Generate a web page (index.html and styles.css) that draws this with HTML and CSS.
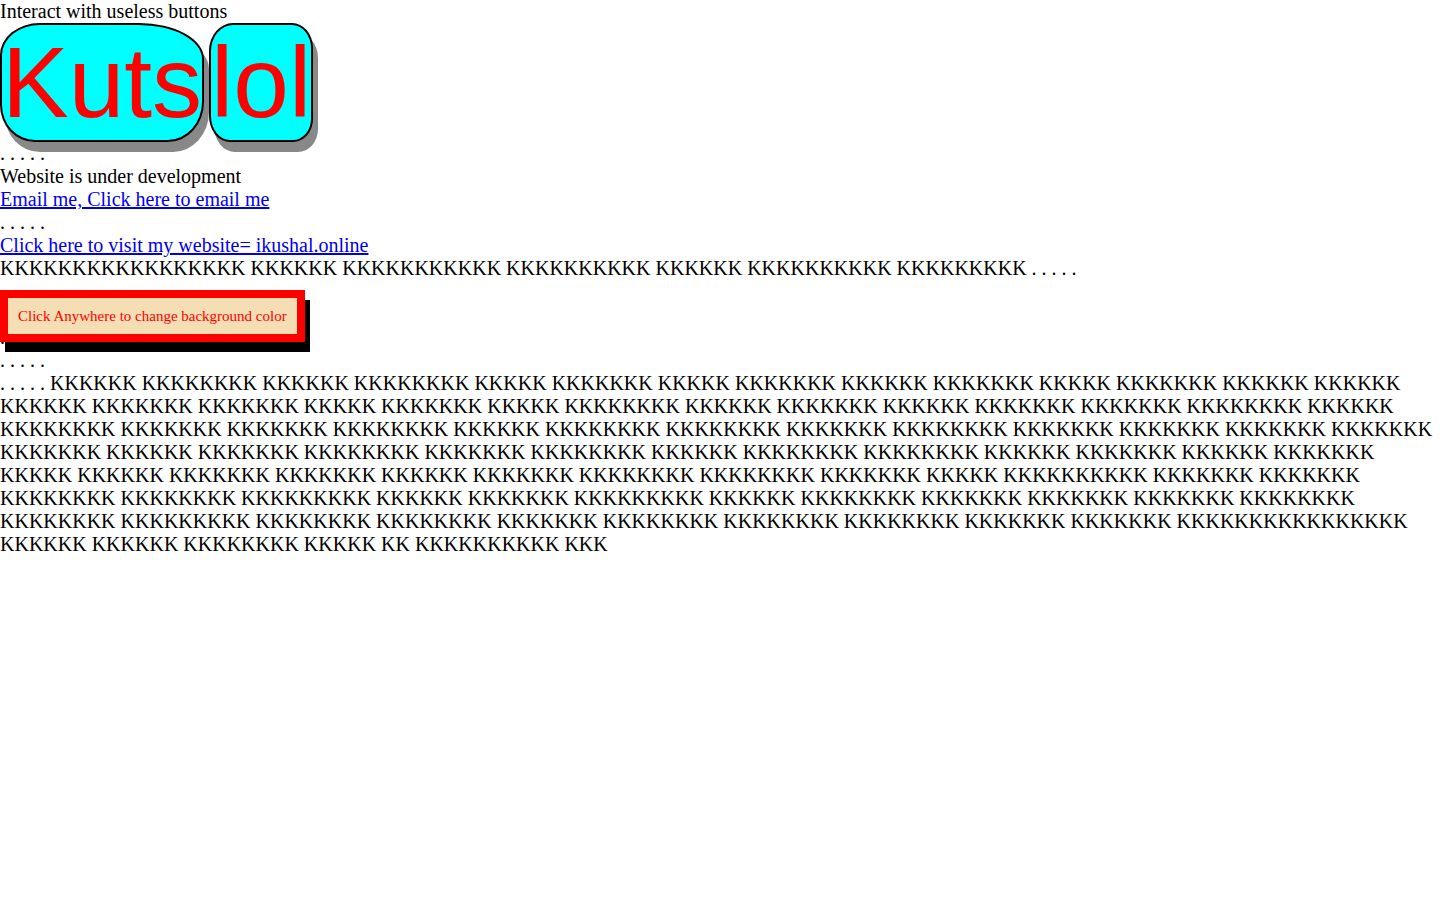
FILE: index.html
```
<!DOCTYPE html>
<html lang="en">
<head>
<meta charset="utf-8">
<title>Useless buttons</title>
<link rel="stylesheet" href="styles.css">
</head>
<body>
<div class="line">Interact with useless buttons</div>
<div class="btn-row"><button class="fun kuts">Kuts</button> <button class="fun lol">lol</button></div>
<div class="line">. . . . .</div>
<div class="line">Website is under development</div>
<div class="line"><a class="link" href="mailto:me@ikushal.online">Email me, Click here to email me</a></div>
<div class="line">. . . . .</div>
<div class="line"><a class="link" href="https://ikushal.online">Click here to visit my website= ikushal.online</a></div>
<div class="line">KKKKKKKKKKKKKKKKK KKKKKK KKKKKKKKKKK KKKKKKKKKK KKKKKK KKKKKKKKKK KKKKKKKKK . . . . .</div>
<button class="bg-btn">Click Anywhere to change background color</button>
<div class="line">. . . . .</div>
<div class="line">. . . . .</div>
<p class="para">. . . . . KKKKKK KKKKKKKK KKKKKK KKKKKKKK KKKKK KKKKKKK KKKKK KKKKKKK KKKKKK KKKKKKK KKKKK KKKKKKK KKKKKK KKKKKK KKKKKK KKKKKKK KKKKKKK KKKKK KKKKKKK KKKKK KKKKKKKK KKKKKK KKKKKKK KKKKKK KKKKKKK KKKKKKK KKKKKKKK KKKKKK KKKKKKKK KKKKKKK KKKKKKK KKKKKKKK KKKKKK KKKKKKKK KKKKKKKK KKKKKKK KKKKKKKK KKKKKKK KKKKKKK KKKKKKK KKKKKKK KKKKKKK KKKKKK KKKKKKK KKKKKKKK KKKKKKK KKKKKKKK KKKKKK KKKKKKKK KKKKKKKK KKKKKK KKKKKKK KKKKKK KKKKKKK KKKKK KKKKKK KKKKKKK KKKKKKK KKKKKK KKKKKKK KKKKKKKK KKKKKKKK KKKKKKK KKKKK KKKKKKKKKK KKKKKKK KKKKKKK KKKKKKKK KKKKKKKK KKKKKKKKK KKKKKK KKKKKKK KKKKKKKKK KKKKKK KKKKKKKK KKKKKKK KKKKKKK KKKKKKK KKKKKKKK KKKKKKKK KKKKKKKKK KKKKKKKK KKKKKKKK KKKKKKK KKKKKKKK KKKKKKKK KKKKKKKK KKKKKKK KKKKKKK KKKKKKKKKKKKKKKK KKKKKK KKKKKK KKKKKKKK KKKKK KK KKKKKKKKKK KKK</p>
</body>
</html>
```
FILE: styles.css
```
html, body {
  margin: 0;
  padding: 0;
  background: #ffffff;
}

body {
  font-family: "Liberation Serif", "Times New Roman", serif;
  font-size: 20px;
  color: #000000;
}

.line {
  line-height: normal;
}

.link {
  color: #0000ee;
  text-decoration: underline;
}

.btn-row {
  line-height: normal;
}

.fun {
  font-family: "Liberation Sans", Arial, sans-serif;
  font-size: 100px;
  line-height: normal;
  color: #ff0000;
  background: #00ffff;
  border: 2px solid #000000;
  padding: 0;
  margin: 0;
  box-shadow: 5px 10px 0 #888888;
  vertical-align: baseline;
}

.kuts {
  border-radius: 40px 65px 36px 35px / 32px 36px 40px 37px;
}

.lol {
  border-radius: 24px 21px 20px 21px / 28px 25px 23px 26px;
}

.bg-btn {
  display: block;
  width: fit-content;
  position: relative;
  margin: 10px 0 -16px 0;
  padding: 9px 10px;
  font-family: "Liberation Serif", "Times New Roman", serif;
  font-size: 15px;
  line-height: 18px;
  color: #ff0000;
  background: #f5deb3;
  border: 8px solid #ff0000;
  border-radius: 0;
  box-shadow: 5px 10px 0 #000000;
}

.para {
  margin: 0;
  line-height: normal;
}
```
